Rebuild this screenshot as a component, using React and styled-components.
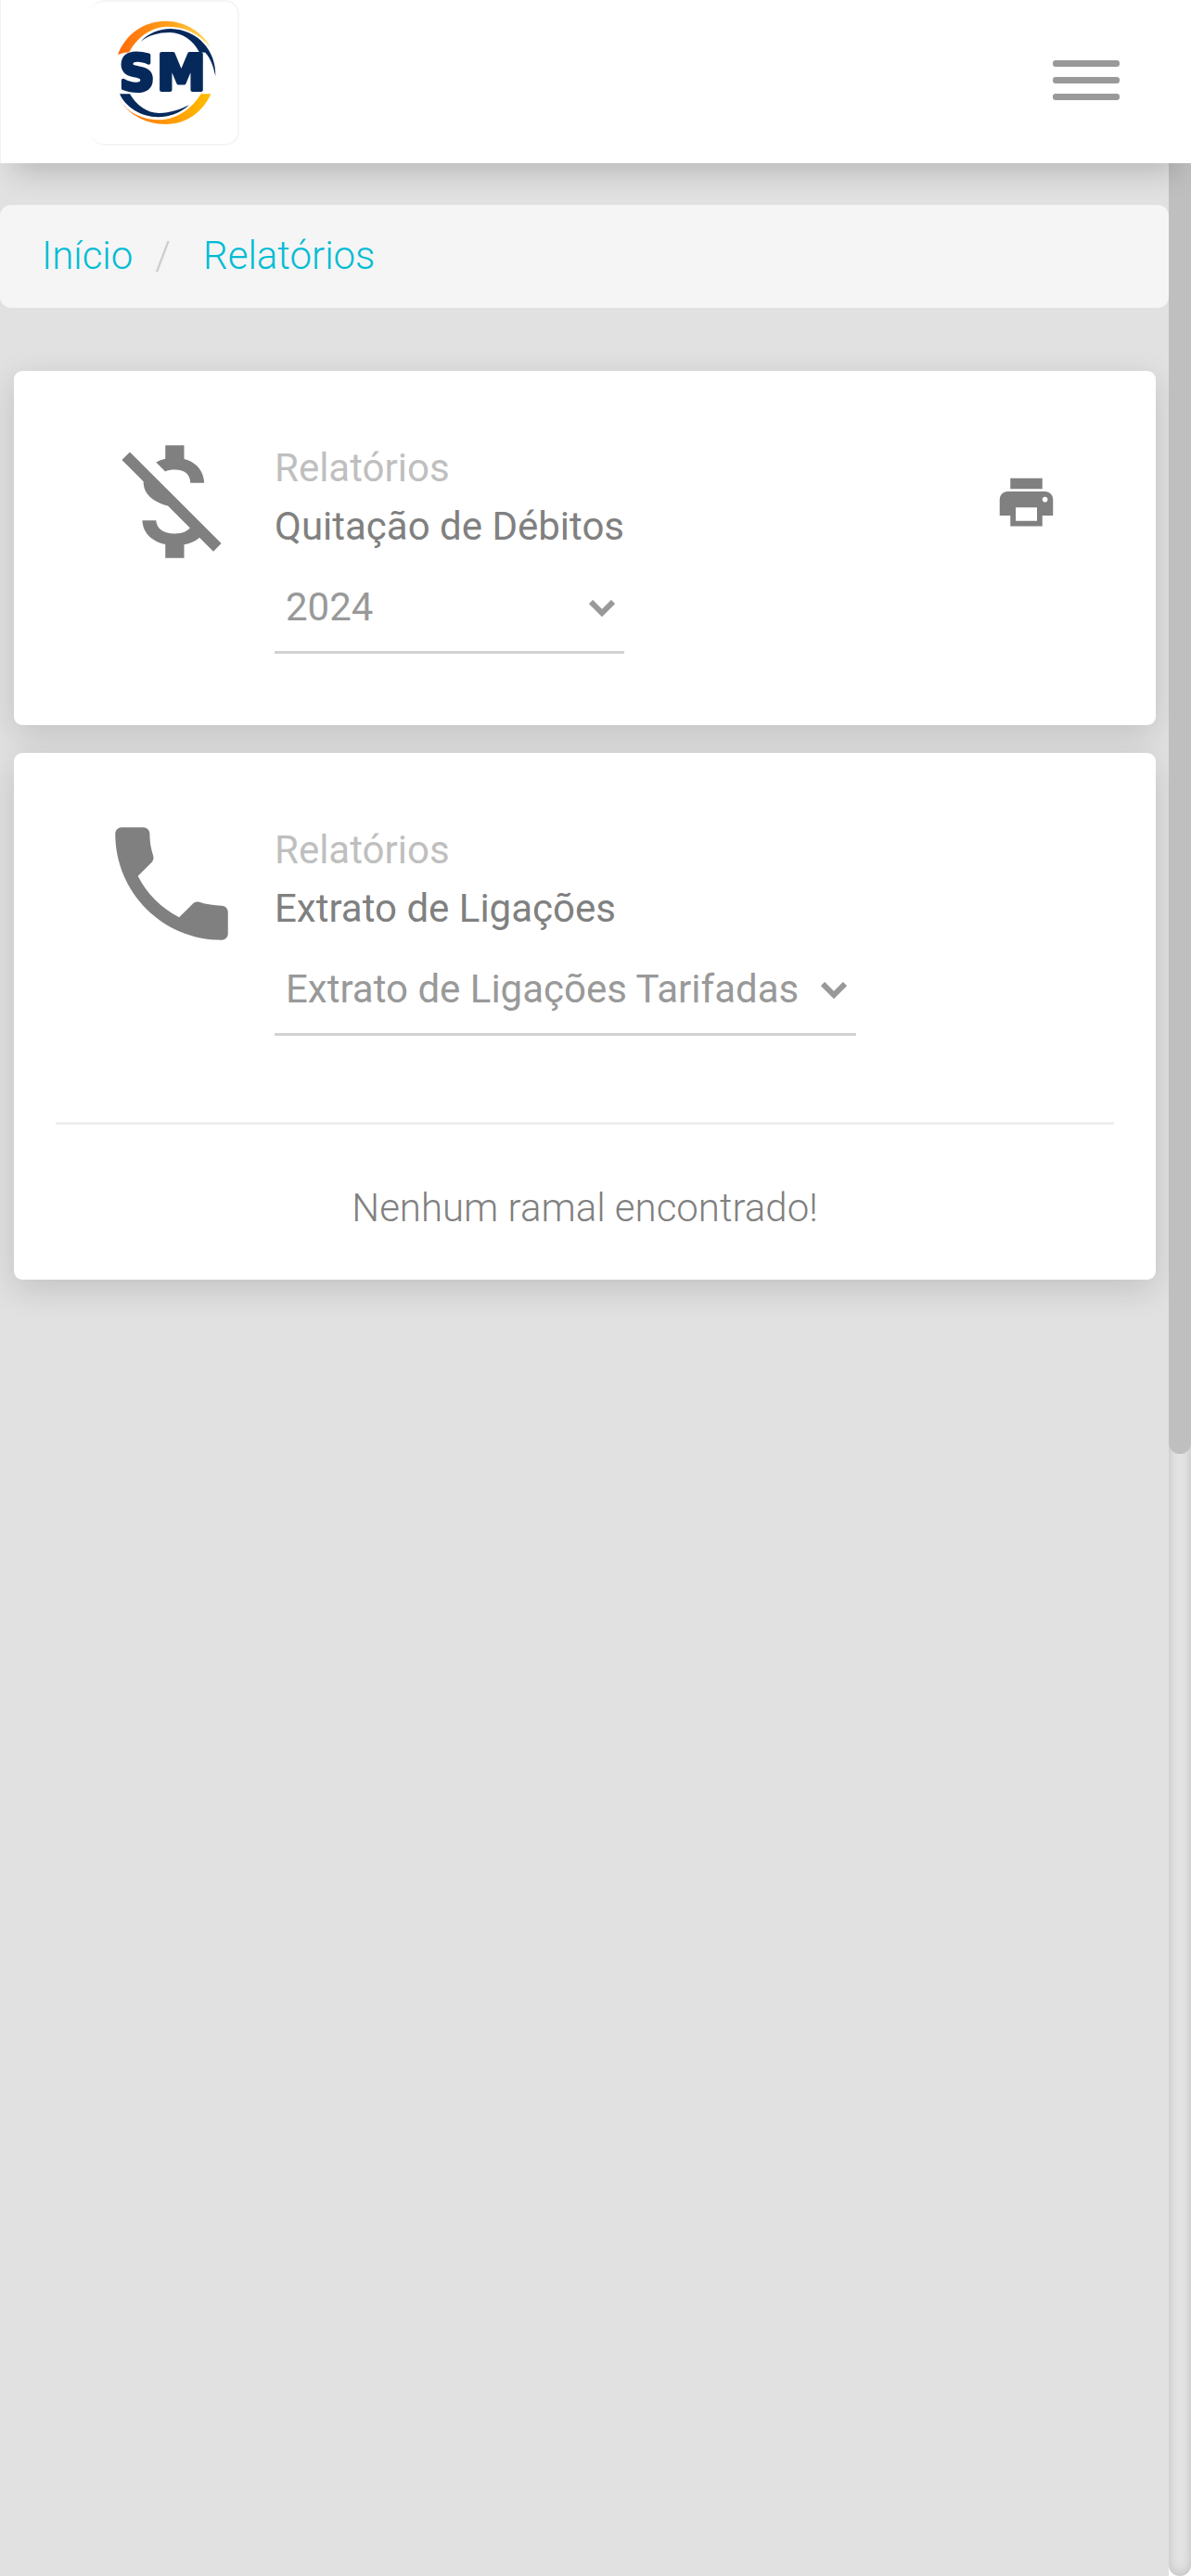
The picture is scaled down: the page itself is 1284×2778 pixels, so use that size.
import React, { useId } from "react";
import styled, { createGlobalStyle } from "styled-components";

const GlobalStyle = createGlobalStyle`
  * { box-sizing: border-box; }
  body {
    margin: 0;
    background: #e1e1e1;
    color: #808080;
    font-family: Roboto, "Liberation Sans", sans-serif;
    font-size: 42px;
    font-weight: 300;
    line-height: 63px;
  }
`;

const Page = styled.div`
  display: flex;
  flex-direction: column;
  min-height: 100vh;
`;

const Header = styled.header`
  position: relative;
  z-index: 1;
  display: flex;
  align-items: flex-start;
  justify-content: space-between;
  height: 176px;
  padding: 0 77px 0 97px;
  background: #fff;
  border-left: 1px solid #f2f2f2;
  box-shadow: 0 24px 30px -15px rgba(0, 0, 0, 0.19);
`;

const LogoLink = styled.a`
  display: block;
  width: 160px;
  height: 157px;
  border: 2px solid #f5f5f5;
  border-left: 0;
  border-radius: 15px;

  svg {
    display: block;
    width: 100%;
    height: 100%;
  }
`;

const MenuButton = styled.button`
  display: flex;
  flex-direction: column;
  align-self: center;
  gap: 11px;
  width: 72px;
  padding: 0 0 3px;
  border: 0;
  background: none;
  cursor: pointer;
`;

const MenuBar = styled.span`
  height: 7px;
  border-radius: 3px;
  background: #999;
`;

const Body = styled.div`
  display: flex;
  flex: 1;
`;

const Main = styled.main`
  flex: 1;
  min-width: 0;
  padding-top: 45px;
`;

const ScrollTrack = styled.div`
  display: flex;
  flex-direction: column;
  width: 24px;
  background: #fff;
`;

const ScrollGroove = styled.div`
  flex: 1;
  border-radius: 0 0 12px 12px;
  background: #e8e8e8;
  box-shadow: inset 0 0 15px rgba(0, 0, 0, 0.2);
`;

const ScrollThumb = styled.div`
  height: 53.5%;
  border-radius: 0 0 12px 12px;
  background: #bfbfbf;
`;

const Breadcrumb = styled.nav`
  margin-bottom: 68px;
  padding: 23px 45px 25px;
  border-radius: 12px;
  background: #f5f5f5;
`;

const Crumbs = styled.ol`
  display: flex;
  margin: 0;
  padding: 0;
  list-style: none;
`;

const Crumb = styled.li`
  & + &::before {
    content: "/";
    padding: 0 35px 0 24px;
    color: #ccc;
  }
`;

const CrumbLink = styled.a`
  color: #00bcd4;
  text-decoration: none;
`;

const Cards = styled.div`
  display: flex;
  flex-direction: column;
  gap: 30px;
  padding: 0 14px 45px 15px;
`;

const Card = styled.section`
  border-radius: 9px;
  background: #fff;
  box-shadow: 0 10px 36px rgba(0, 0, 0, 0.14);
`;

const CardBody = styled.div`
  display: flex;
  align-items: flex-start;
  gap: 30px;
  padding: 60px 105px 77px 89px;
`;

const Icon = styled.svg`
  display: block;
  flex: none;
  width: ${(p) => p.$size}px;
  height: ${(p) => p.$size}px;
  fill: #808080;
`;

const Info = styled.div`
  padding-top: 13px;
  font-weight: 400;
`;

const Category = styled.p`
  margin: 0;
  color: #bfbfbf;
`;

const Title = styled.label`
  display: block;
  color: #808080;
`;

const SelectBox = styled.div`
  display: grid;
  align-items: center;
  margin-top: 10px;

  & > * {
    grid-area: 1 / 1;
  }
`;

const Select = styled.select`
  width: 100%;
  height: 96px;
  padding: 0 60px 3px 12px;
  appearance: none;
  border: 0;
  border-bottom: 3px solid #d2d2d2;
  border-radius: 0;
  background: transparent;
  color: #999;
  font: inherit;
  cursor: pointer;
`;

const Chevron = styled.svg`
  justify-self: end;
  width: 28px;
  height: 21px;
  padding-bottom: 3px;
  margin-right: 10px;
  fill: none;
  stroke: #999;
  stroke-width: 6;
  pointer-events: none;
`;

const PrintButton = styled.button`
  margin: 47px 0 0 auto;
  padding: 0;
  border: 0;
  background: none;
  cursor: pointer;
`;

const Divider = styled.hr`
  height: 3px;
  margin: 16px 45px 58px;
  border: 0;
  background: #eee;
`;

const Message = styled.p`
  margin: 0;
  padding-bottom: 46px;
  text-align: center;
`;

const MONEY_OFF =
  "M12.5 6.9c1.78 0 2.44.85 2.5 2.1h2.21c-.07-1.72-1.12-3.3-3.21-3.81V3h-3v2.16c-.53.12-1.03.3-1.48.54l1.47 1.47c.41-.17.91-.27 1.51-.27zM5.33 4.06L4.06 5.33 7.5 8.77c0 2.08 1.56 3.21 3.91 3.91l3.51 3.51c-.34.48-1.05.91-2.42.91-2.06 0-2.87-.92-2.98-2.1h-2.2c.12 2.19 1.76 3.42 3.68 3.83V21h3v-2.15c.96-.18 1.82-.55 2.45-1.12l2.22 2.22 1.27-1.27L5.33 4.06z";
const PHONE =
  "M6.62 10.79c1.44 2.83 3.76 5.14 6.59 6.59l2.2-2.2c.27-.27.67-.36 1.02-.24 1.12.37 2.33.57 3.57.57.55 0 1 .45 1 1V20c0 .55-.45 1-1 1-9.39 0-17-7.61-17-17 0-.55.45-1 1-1h3.5c.55 0 1 .45 1 1 0 1.25.2 2.45.57 3.57.11.35.03.74-.25 1.02l-2.2 2.2z";
const PRINT =
  "M19 8H5c-1.66 0-3 1.34-3 3v6h4v4h12v-4h4v-6c0-1.66-1.34-3-3-3zm-3 11H8v-5h8v5zm3-7c-.55 0-1-.45-1-1s.45-1 1-1 1 .45 1 1-.45 1-1 1zm-1-9H6v4h12V3z";

const LogoText = styled.text`
  fill: #06295c;
  stroke: #06295c;
  stroke-width: 12;
  stroke-linejoin: round;
  font-family: "DejaVu Sans", sans-serif;
  font-size: 158px;
  font-weight: 700;
`;

function Logo() {
  return (
    <svg viewBox="294 6 474 459" role="img" aria-label="SM">
      <defs>
        <linearGradient id="logo-top" x1="0" x2="1">
          <stop offset="0" stopColor="#ff6a0a" />
          <stop offset="0.6" stopColor="#ffa51a" />
          <stop offset="1" stopColor="#ffdc60" />
        </linearGradient>
        <linearGradient id="logo-bottom" x1="0" x2="1">
          <stop offset="0" stopColor="#f47a20" />
          <stop offset="0.4" stopColor="#ff8c0a" />
          <stop offset="1" stopColor="#ffbe00" />
        </linearGradient>
      </defs>
      <path
        fill="url(#logo-top)"
        d="M381 177C405 112 465 68 535 68C600 68 655 105 680 152C640 105 595 86 540 86C485 88 440 125 418 169Q400 169 381 177Z"
      />
      <path
        fill="#06295c"
        d="M455 134C480 108 515 93 552 93C640 95 700 165 697 247C690 215 682 190 664 170L644 168C625 130 590 107 550 105C510 105 480 115 455 134Z"
      />
      <path
        fill="#06295c"
        d="M387 304L420 304C440 340 475 366 515 366C550 366 585 353 612 340C580 368 545 379 512 379C455 379 405 345 387 304Z"
      />
      <path
        fill="url(#logo-bottom)"
        d="M384 318C410 365 460 388 520 388C580 385 625 345 650 304L682 304C655 365 600 402 537 402C465 402 410 365 384 318Z"
      />
      <LogoText x="386" y="290">S</LogoText>
      <LogoText x="508" y="290">M</LogoText>
    </svg>
  );
}

function ReportCard({ icon, title, options, onPrint, children }) {
  const id = useId();
  return (
    <Card>
      <CardBody>
        <Icon $size={162} viewBox="0 0 24 24" aria-hidden="true">
          <path d={icon} />
        </Icon>
        <Info>
          <Category>Relatórios</Category>
          <Title htmlFor={id}>{title}</Title>
          <SelectBox>
            <Select id={id}>
              {options.map((option) => (
                <option key={option}>{option}</option>
              ))}
            </Select>
            <Chevron viewBox="0 0 28 18" aria-hidden="true">
              <path d="M2 2L14 14L26 2" />
            </Chevron>
          </SelectBox>
        </Info>
        {onPrint && (
          <PrintButton type="button" aria-label="Imprimir" onClick={onPrint}>
            <Icon $size={69} viewBox="0 0 24 24" aria-hidden="true">
              <path d={PRINT} />
            </Icon>
          </PrintButton>
        )}
      </CardBody>
      {children}
    </Card>
  );
}

export default function App() {
  return (
    <>
      <GlobalStyle />
      <Page>
        <Header>
          <LogoLink href="#">
            <Logo />
          </LogoLink>
          <MenuButton type="button" aria-label="Menu">
            <MenuBar />
            <MenuBar />
            <MenuBar />
          </MenuButton>
        </Header>
        <Body>
          <Main>
            <Breadcrumb aria-label="Navegação">
              <Crumbs>
                <Crumb>
                  <CrumbLink href="#">Início</CrumbLink>
                </Crumb>
                <Crumb>
                  <CrumbLink href="#">Relatórios</CrumbLink>
                </Crumb>
              </Crumbs>
            </Breadcrumb>
            <Cards>
              <ReportCard
                icon={MONEY_OFF}
                title="Quitação de Débitos"
                options={["2024"]}
                onPrint={() => window.print()}
              />
              <ReportCard
                icon={PHONE}
                title="Extrato de Ligações"
                options={["Extrato de Ligações Tarifadas"]}
              >
                <Divider />
                <Message>Nenhum ramal encontrado!</Message>
              </ReportCard>
            </Cards>
          </Main>
          <ScrollTrack aria-hidden="true">
            <ScrollGroove>
              <ScrollThumb />
            </ScrollGroove>
          </ScrollTrack>
        </Body>
      </Page>
    </>
  );
}
